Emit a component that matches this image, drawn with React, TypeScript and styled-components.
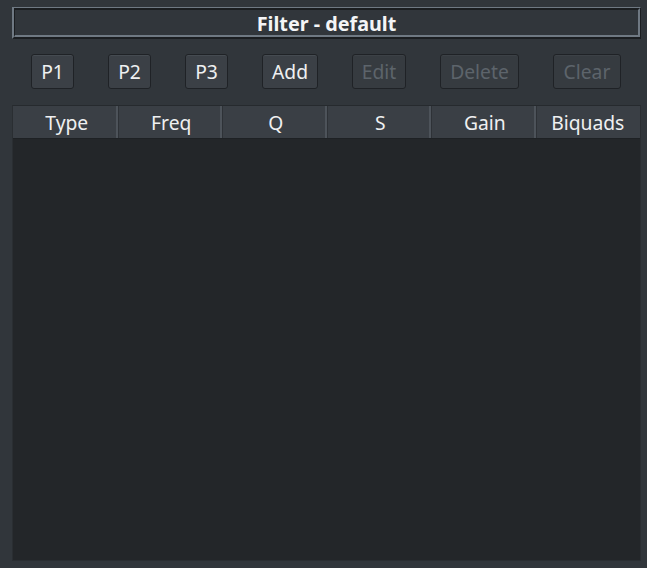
import React from "react";
import styled, { createGlobalStyle } from "styled-components";

const Global = createGlobalStyle`
  html, body { margin: 0; padding: 0; background: #31363b; }
  body { font-family: "Noto Sans", "Open Sans", sans-serif; }
`;

const Page = styled.div`
  width: 647px;
  height: 568px;
  box-sizing: border-box;
  padding: 7px 6px 7px 12px;
  background: #31363b;
  display: flex;
  flex-direction: column;
  color: #eff0f1;
`;

const TitleFrame = styled.div`
  height: 32px;
  box-sizing: border-box;
  border-style: solid;
  border-width: 1px 1px 2px 2px;
  border-color: #6f7983 #1b1e21 #1b1e21 #6f7983;
  display: flex;
`;

const TitleInner = styled.div`
  flex: 1;
  border-style: solid;
  border-width: 2px 2px 2px 1px;
  border-color: #1b1e21 #6f7983 #6f7983 #1b1e21;
  display: flex;
  align-items: center;
  justify-content: center;
  font-weight: 700;
  font-size: 19.8px;
  color: #f4f5f6;
  line-height: 1;
  padding-top: 3px;
`;

const ButtonRow = styled.div`
  display: flex;
  gap: 34px;
  padding-left: 19px;
  margin-top: 15px;
  height: 35px;
`;

const Button = styled.button<{ $w: number }>`
  width: ${(p) => p.$w}px;
  height: 35px;
  box-sizing: border-box;
  padding: 1px 0 0;
  border: 1px solid #1f2226;
  border-radius: 3px;
  background: ${(p) => (p.disabled ? "#363b40" : "#3b4046")};
  box-shadow: inset 0 1px 0 ${(p) => (p.disabled ? "#3c4146" : "#454b51")};
  color: ${(p) => (p.disabled ? "#5d646b" : "#eff0f1")};
  font-family: "Noto Sans", "Open Sans", sans-serif;
  font-size: 19.3px;
  display: flex;
  align-items: center;
  justify-content: center;
  line-height: 1;
`;

const Table = styled.div`
  margin-top: 16px;
  flex: 1;
  display: flex;
  flex-direction: column;
  border: 1px solid #2a2e32;
  border-top-color: #262a2e;
  background: #232629;
`;

const HeaderRow = styled.div`
  display: grid;
  grid-template-columns: repeat(6, 1fr);
  height: 32px;
  border-bottom: 1px solid #1e2124;
  background: #3a3f45;
`;

const HeaderCell = styled.div<{ $last?: boolean }>`
  display: flex;
  align-items: center;
  justify-content: center;
  font-size: 19.3px;
  color: #eff0f1;
  border-right: ${(p) => (p.$last ? "none" : "2px solid #4d535a")};
  box-shadow: ${(p) => (p.$last ? "none" : "1px 0 0 #2e3237")};
  line-height: 1;
  padding-top: 2px;
  padding-left: ${(p) => (p.$last ? "0" : "5px")};
`;

const Body = styled.div`
  flex: 1;
  background: #232629;
`;

const buttons: { label: string; w: number; disabled?: boolean }[] = [
  { label: "P1", w: 43 },
  { label: "P2", w: 43 },
  { label: "P3", w: 43 },
  { label: "Add", w: 56 },
  { label: "Edit", w: 54, disabled: true },
  { label: "Delete", w: 79, disabled: true },
  { label: "Clear", w: 68, disabled: true },
];

const columns = ["Type", "Freq", "Q", "S", "Gain", "Biquads"];

export default function App() {
  return (
    <>
      <Global />
      <Page>
        <TitleFrame>
          <TitleInner>Filter - default</TitleInner>
        </TitleFrame>
        <ButtonRow>
          {buttons.map((b) => (
            <Button key={b.label} $w={b.w} disabled={b.disabled}>
              {b.label}
            </Button>
          ))}
        </ButtonRow>
        <Table>
          <HeaderRow>
            {columns.map((c, i) => (
              <HeaderCell key={c} $last={i === columns.length - 1}>
                {c}
              </HeaderCell>
            ))}
          </HeaderRow>
          <Body />
        </Table>
      </Page>
    </>
  );
}
